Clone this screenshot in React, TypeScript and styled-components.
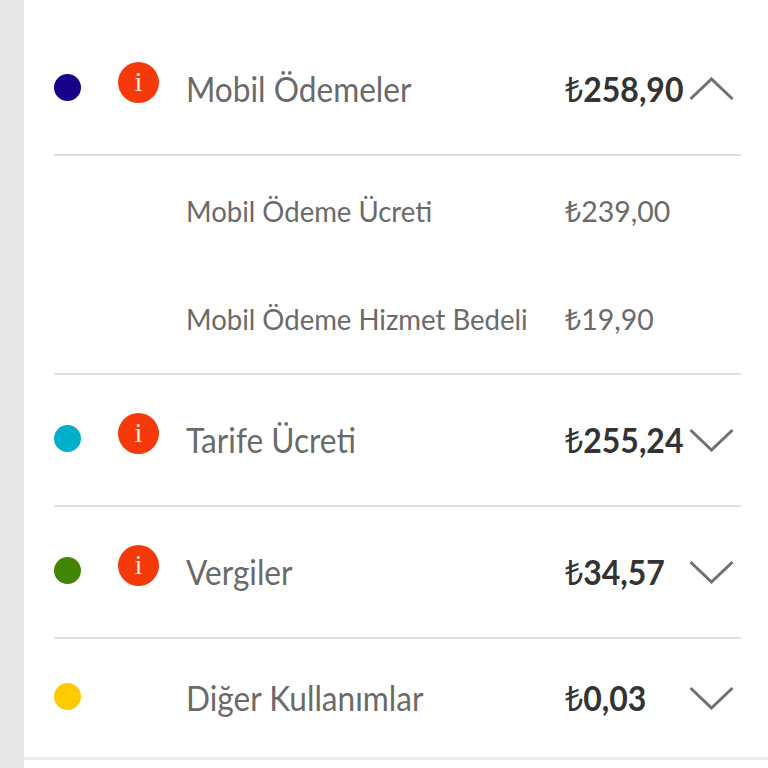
import React from "react";
import styled, { createGlobalStyle } from "styled-components";

const Global = createGlobalStyle`
  html, body { margin: 0; padding: 0; background: #fff; }
  body { font-family: Lato, "Noto Sans", "DejaVu Sans", sans-serif; }
  * { box-sizing: border-box; }
`;

const Page = styled.div`
  width: 768px;
  height: 768px;
  overflow: hidden;
  display: flex;
  background: #fff;
`;
const Gutter = styled.div`
  width: 24px;
  flex: none;
  background: #e8e8e8;
`;
const Main = styled.div`
  flex: 1;
  padding-top: 24px;
`;
const List = styled.div`
  padding: 0 27px 0 30px;
`;
const Row = styled.div<{ $last?: boolean }>`
  display: grid;
  grid-template-columns: 64px 69px 378px 125px 1fr;
  align-items: center;
  height: ${(p) => (p.$last ? 118 : 132)}px;
  border-bottom: ${(p) => (p.$last ? "none" : "2px solid #dedede")};
`;
const Dot = styled.span<{ $color: string }>`
  width: 27px;
  height: 27px;
  border-radius: 50%;
  background: ${(p) => p.$color};
  margin-bottom: 4px;
`;
const Badge = styled.span`
  width: 41px;
  height: 41px;
  border-radius: 50%;
  background: #f5390b;
  color: #fff3e8;
  font-family: "Liberation Serif", serif;
  font-size: 27px;
  line-height: 41px;
  text-align: center;
  margin-bottom: 14px;
`;
const Label = styled.span`
  grid-column: 3;
  margin-left: -1px;
  margin-bottom: 2px;
  font-size: 34px;
  color: #6a6a6a;
  white-space: nowrap;
  transform: scaleX(0.93);
  transform-origin: left center;
`;
const Value = styled.span`
  font-size: 34px;
  font-weight: 700;
  color: #333;
  white-space: nowrap;
  transform: scaleX(0.94);
  transform-origin: left center;
`;
const Currency = styled.span`
  font-family: "Noto Sans", sans-serif;
  font-weight: 400;
`;
const Chevron = styled.svg`
  width: 46px;
  height: 24px;
  margin-left: -1px;
  display: block;
`;
const SubGroup = styled.div`
  height: 219px;
  border-bottom: 2px solid #dedede;
`;
const SubRow = styled.div`
  display: grid;
  grid-template-columns: 133px 378px 1fr;
  align-items: center;
  height: 108px;
`;
const SubLabel = styled.span`
  grid-column: 2;
  margin-left: -1px;
  font-size: 29px;
  color: #6a6a6a;
  white-space: nowrap;
  transform: scaleX(0.95);
  transform-origin: left center;
`;
const SubValue = styled.span`
  font-size: 29px;
  color: #6a6a6a;
  white-space: nowrap;
  transform: scaleX(0.98);
  transform-origin: left center;
`;
const Footer = styled.div`
  border-top: 3px solid #eeeeee;
`;

const Arrow = ({ up }: { up?: boolean }) => (
  <Chevron viewBox="0 0 46 24" fill="none" stroke="#707070" strokeWidth="3">
    <path d={up ? "M1.5 22 L22.5 2 L43.5 22" : "M1.5 2 L22.5 22 L43.5 2"} />
  </Chevron>
);

const Money = ({ v }: { v: string }) => (
  <Value>
    <Currency>₺</Currency>
    {v}
  </Value>
);

export default function App() {
  return (
    <Page>
      <Global />
      <Gutter />
      <Main>
        <List>
          <Row>
            <Dot $color="#17008a" />
            <Badge>i</Badge>
            <Label>Mobil Ödemeler</Label>
            <Money v="258,90" />
            <Arrow up />
          </Row>
          <SubGroup>
            <SubRow>
              <SubLabel>Mobil Ödeme Ücreti</SubLabel>
              <SubValue><Currency>₺</Currency>239,00</SubValue>
            </SubRow>
            <SubRow>
              <SubLabel>Mobil Ödeme Hizmet Bedeli</SubLabel>
              <SubValue><Currency>₺</Currency>19,90</SubValue>
            </SubRow>
          </SubGroup>
          <Row>
            <Dot $color="#00b0ca" />
            <Badge>i</Badge>
            <Label>Tarife Ücreti</Label>
            <Money v="255,24" />
            <Arrow />
          </Row>
          <Row>
            <Dot $color="#428505" />
            <Badge>i</Badge>
            <Label>Vergiler</Label>
            <Money v="34,57" />
            <Arrow />
          </Row>
          <Row $last>
            <Dot $color="#fecb00" />
            <span />
            <Label>Diğer Kullanımlar</Label>
            <Money v="0,03" />
            <Arrow />
          </Row>
        </List>
        <Footer />
      </Main>
    </Page>
  );
}
